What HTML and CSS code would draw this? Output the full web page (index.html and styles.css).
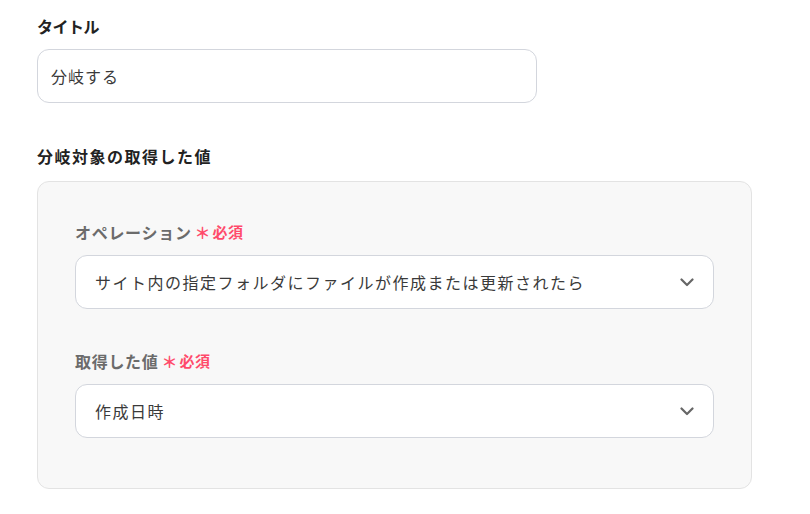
FILE: index.html
```html
<!DOCTYPE html>
<html lang="ja">
<head>
<meta charset="utf-8">
<link rel="stylesheet" href="styles.css">
</head>
<body>
<div class="page">
  <div class="label">タイトル</div>
  <div class="input title-input">分岐する</div>

  <div class="label section-label">分岐対象の取得した値</div>
  <div class="panel">
    <div class="sub-label">オペレーション<span class="req-star">＊</span><span class="req">必須</span></div>
    <div class="input select">
      <span class="value">サイト内の指定フォルダにファイルが作成または更新されたら</span>
      <svg class="chev" width="14" height="9" viewBox="0 0 14 9"><path d="M1.5 1.5 L7 7 L12.5 1.5" fill="none" stroke="#666" stroke-width="2.2" stroke-linecap="round" stroke-linejoin="round"/></svg>
    </div>
    <div class="sub-label second">取得した値<span class="req-star">＊</span><span class="req">必須</span></div>
    <div class="input select">
      <span class="value">作成日時</span>
      <svg class="chev" width="14" height="9" viewBox="0 0 14 9"><path d="M1.5 1.5 L7 7 L12.5 1.5" fill="none" stroke="#666" stroke-width="2.2" stroke-linecap="round" stroke-linejoin="round"/></svg>
    </div>
  </div>
</div>
</body>
</html>
```
FILE: styles.css
```css
* { box-sizing: border-box; }
html, body { margin: 0; padding: 0; background: #fff; }
body {
  font-family: "Noto Sans CJK JP", "Noto Sans", sans-serif;
  color: #333;
}
.page {
  padding: 14px 0 0 37px;
  width: 752px;
}
.label {
  font-size: 16px;
  font-weight: 700;
  line-height: 24px;
  color: #222;
  margin-bottom: 11px;
  letter-spacing: -0.5px;
}
.section-label {
  font-size: 16px;
  margin-top: 41px;
  margin-bottom: 13px;
  letter-spacing: 1.5px;
}
.input {
  height: 54px;
  border: 1px solid #d3d6dd;
  border-radius: 12px;
  background: #fff;
  display: flex;
  align-items: center;
  padding: 0 13px;
  font-size: 16px;
  color: #3a3a3a;
  letter-spacing: 1px;
}
.title-input { width: 500px; }
.panel {
  width: 715px;
  background: #f8f8f8;
  border: 1px solid #e3e3e3;
  border-radius: 12px;
  padding: 38px 37px 50px;
}
.sub-label {
  font-size: 16px;
  font-weight: 700;
  line-height: 24px;
  color: #6b6b6b;
  margin-bottom: 11px;
  display: flex;
  align-items: center;
  letter-spacing: 0.7px;
}
.sub-label.second { margin-top: 40px; }
.req-star {
  color: #ff4b6b;
  font-size: 16px;
  margin-left: 3px;
  letter-spacing: 0;
}
.req {
  color: #ff4b6b;
  font-size: 15px;
  margin-left: 2px;
  letter-spacing: 0.5px;
}
.select {
  justify-content: space-between;
  padding: 0 19px 0 19px;
  font-size: 16px;
  letter-spacing: 1.5px;
}
.chev { flex: none; margin-top: 1px; }
```
